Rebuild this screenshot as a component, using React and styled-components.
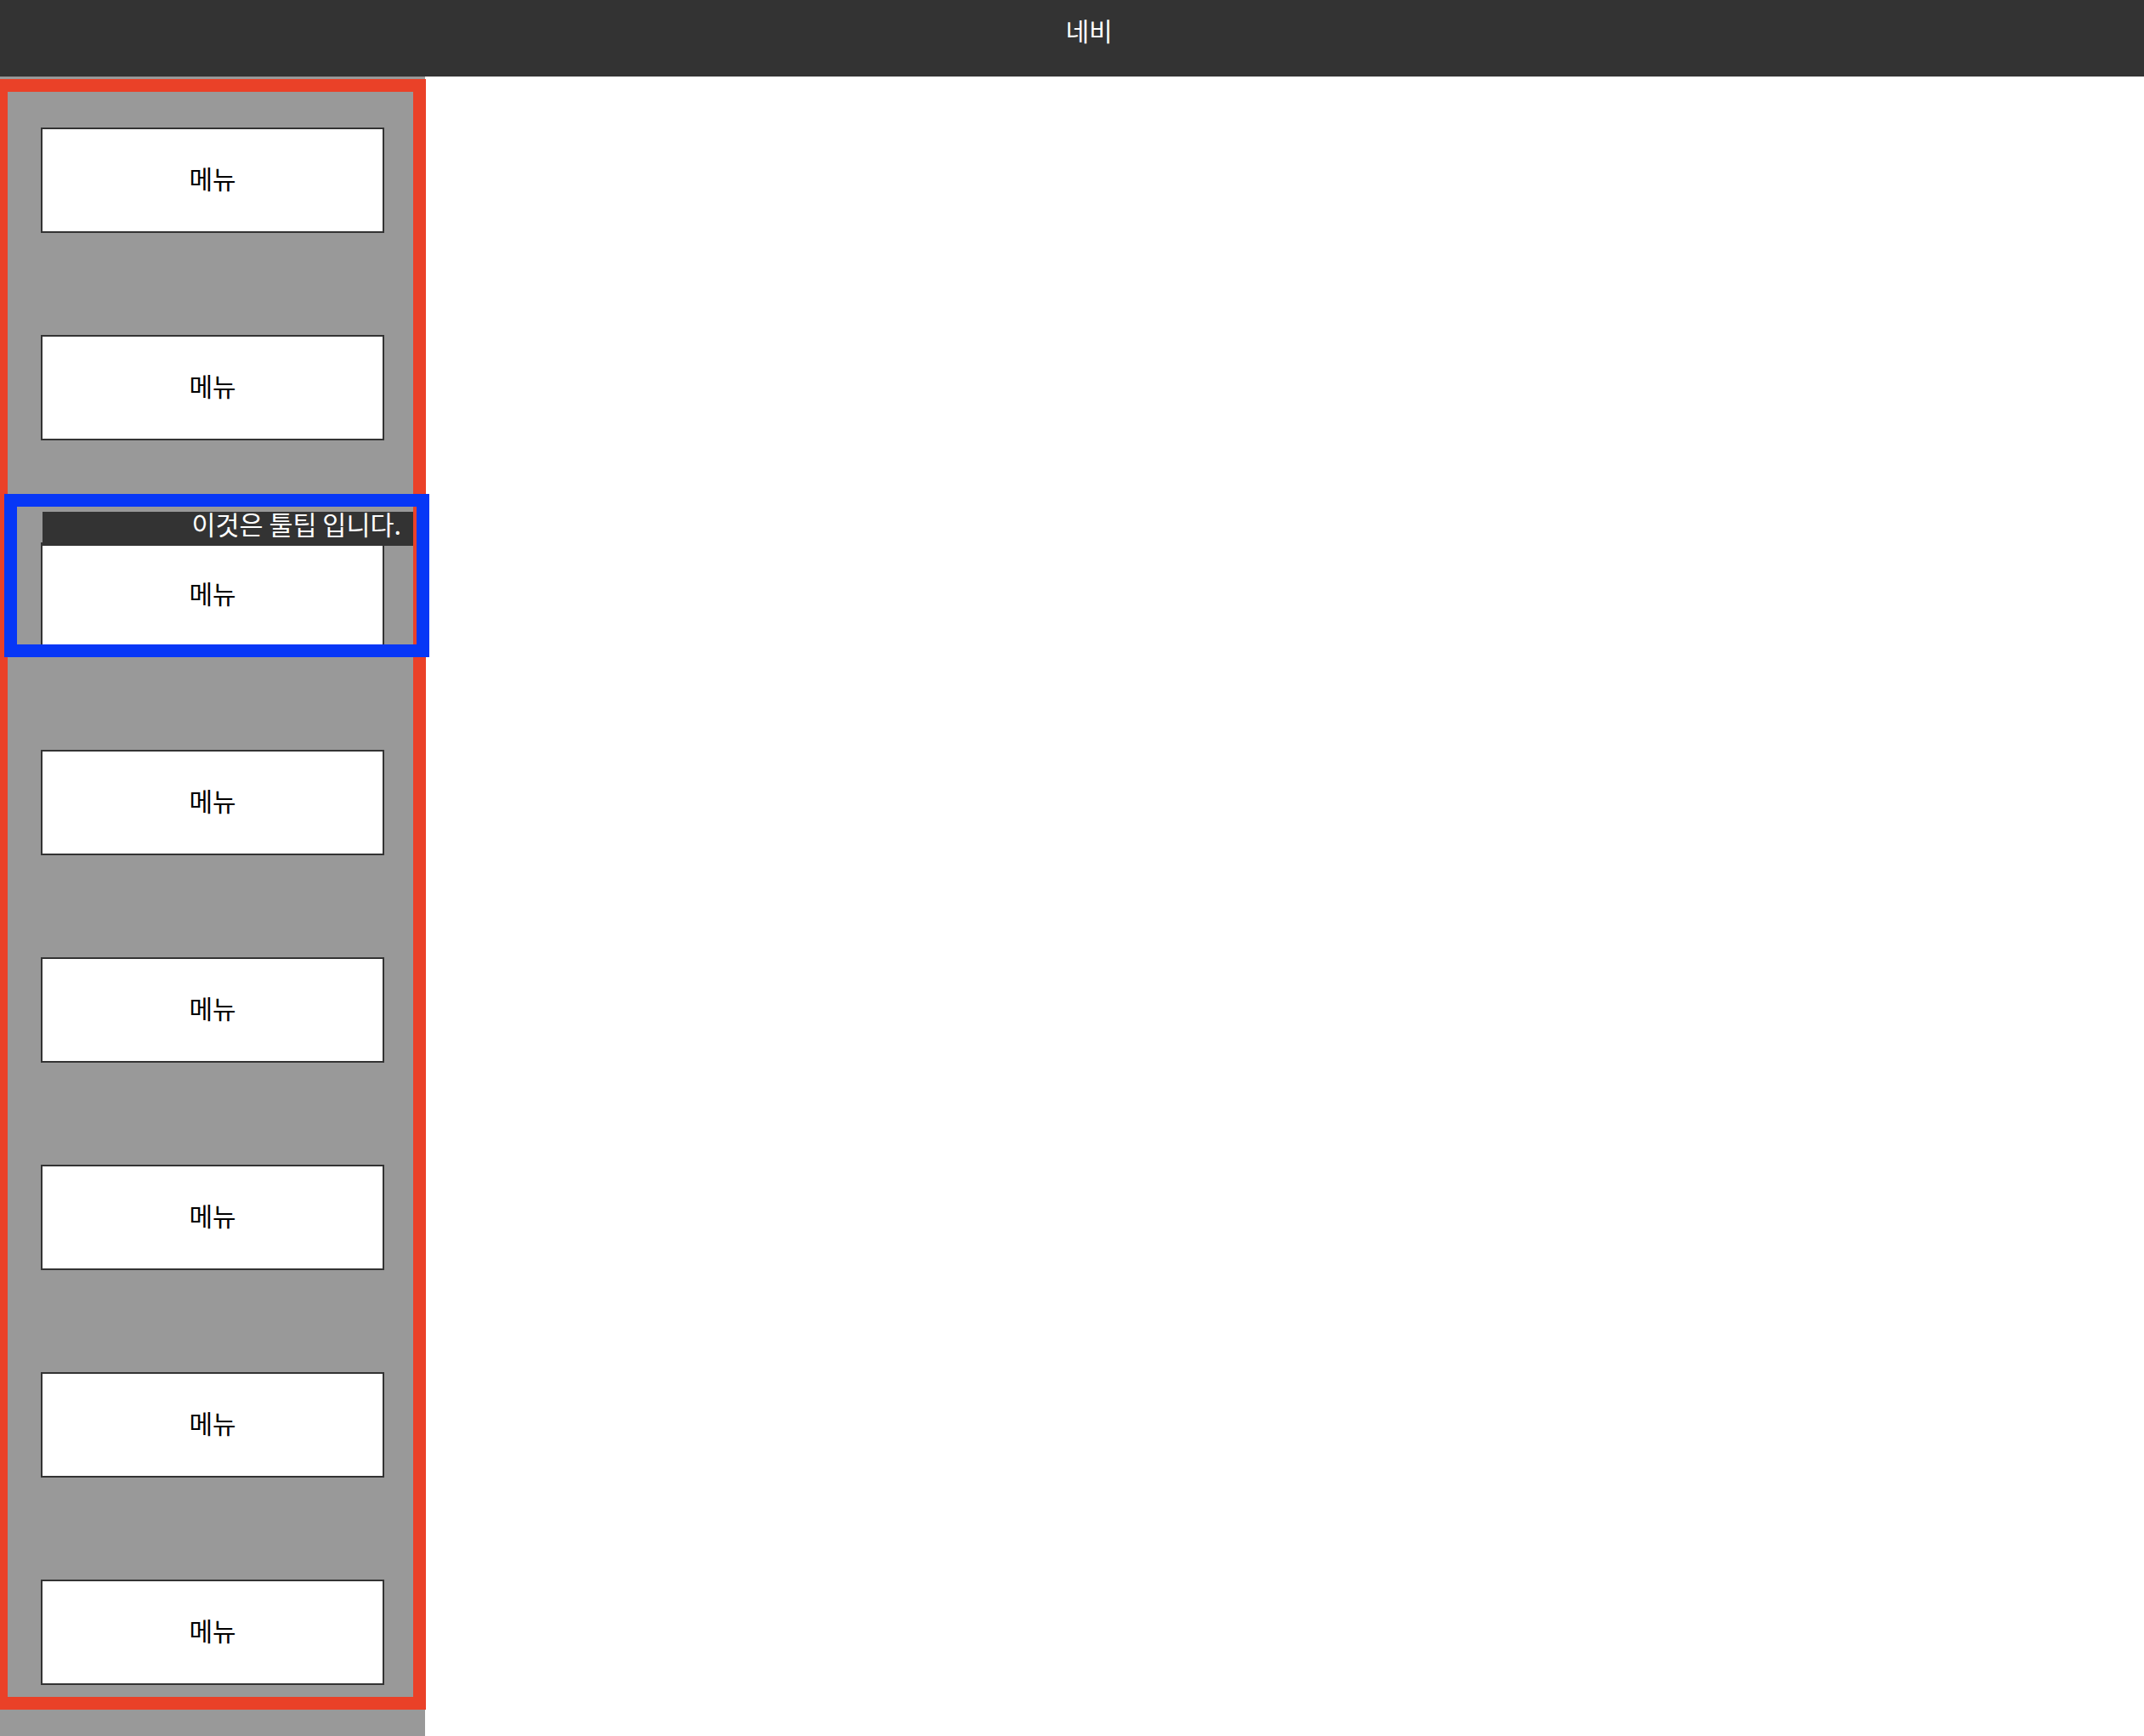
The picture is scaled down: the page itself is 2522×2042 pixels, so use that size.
import React from "react";
import styled, { createGlobalStyle } from "styled-components";

const Global = createGlobalStyle`
  html, body {
    margin: 0;
    padding: 0;
    background: #ffffff;
  }
  body {
    font-family: "Noto Sans CJK KR", "Noto Sans", sans-serif;
    width: 2522px;
    height: 2042px;
    overflow: hidden;
  }
  * { box-sizing: border-box; }
`;

const Page = styled.div`
  position: relative;
  width: 2522px;
  height: 2042px;
  display: flex;
  flex-direction: column;
`;

const Header = styled.header`
  height: 90px;
  flex: 0 0 90px;
  background: #333333;
  color: #ffffff;
  display: flex;
  align-items: center;
  justify-content: center;
  padding-left: 40px;
  padding-bottom: 20px;
  font-size: 30px;
  line-height: 1;
`;

const Body = styled.div`
  flex: 1;
  display: flex;
`;

const Sidebar = styled.nav`
  width: 500px;
  background: #999999;
  padding-top: 60px;
  display: flex;
  flex-direction: column;
  align-items: center;
  gap: 120px;
`;

const MenuItem = styled.div`
  position: relative;
  width: 404px;
  height: 124px;
  background: #ffffff;
  border: 2px solid #333333;
  display: flex;
  align-items: center;
  justify-content: center;
  padding-bottom: 6px;
  color: #000000;
  font-size: 30px;
  line-height: 1;
`;

const Tooltip = styled.div`
  position: absolute;
  top: -38px;
  left: 0;
  width: 436px;
  height: 40px;
  background: #333333;
  color: #ffffff;
  font-size: 30.5px;
  line-height: 28px;
  text-align: right;
  padding-right: 14px;
  white-space: nowrap;
  z-index: 2;
`;

const Content = styled.main`
  flex: 1;
  background: #ffffff;
`;

const Annotation = styled.div`
  position: absolute;
  border: 15px solid ${(p) => p.$color};
  pointer-events: none;
  z-index: ${(p) => p.$z};
`;

export default function App() {
  const items = Array.from({ length: 8 }, (_, i) => i);
  return (
    <>
      <Global />
      <Page>
        <Header>네비</Header>
        <Body>
          <Sidebar>
            {items.map((i) => (
              <MenuItem key={i}>
                {i === 2 && <Tooltip>이것은 툴팁 입니다.</Tooltip>}
                메뉴
              </MenuItem>
            ))}
          </Sidebar>
          <Content />
        </Body>
        <Annotation
          $color="#ea4128"
          $z={5}
          style={{ left: -6, top: 93, width: 507, height: 1918 }}
        />
        <Annotation
          $color="#0737f6"
          $z={6}
          style={{ left: 5, top: 581, width: 500, height: 192 }}
        />
      </Page>
    </>
  );
}
